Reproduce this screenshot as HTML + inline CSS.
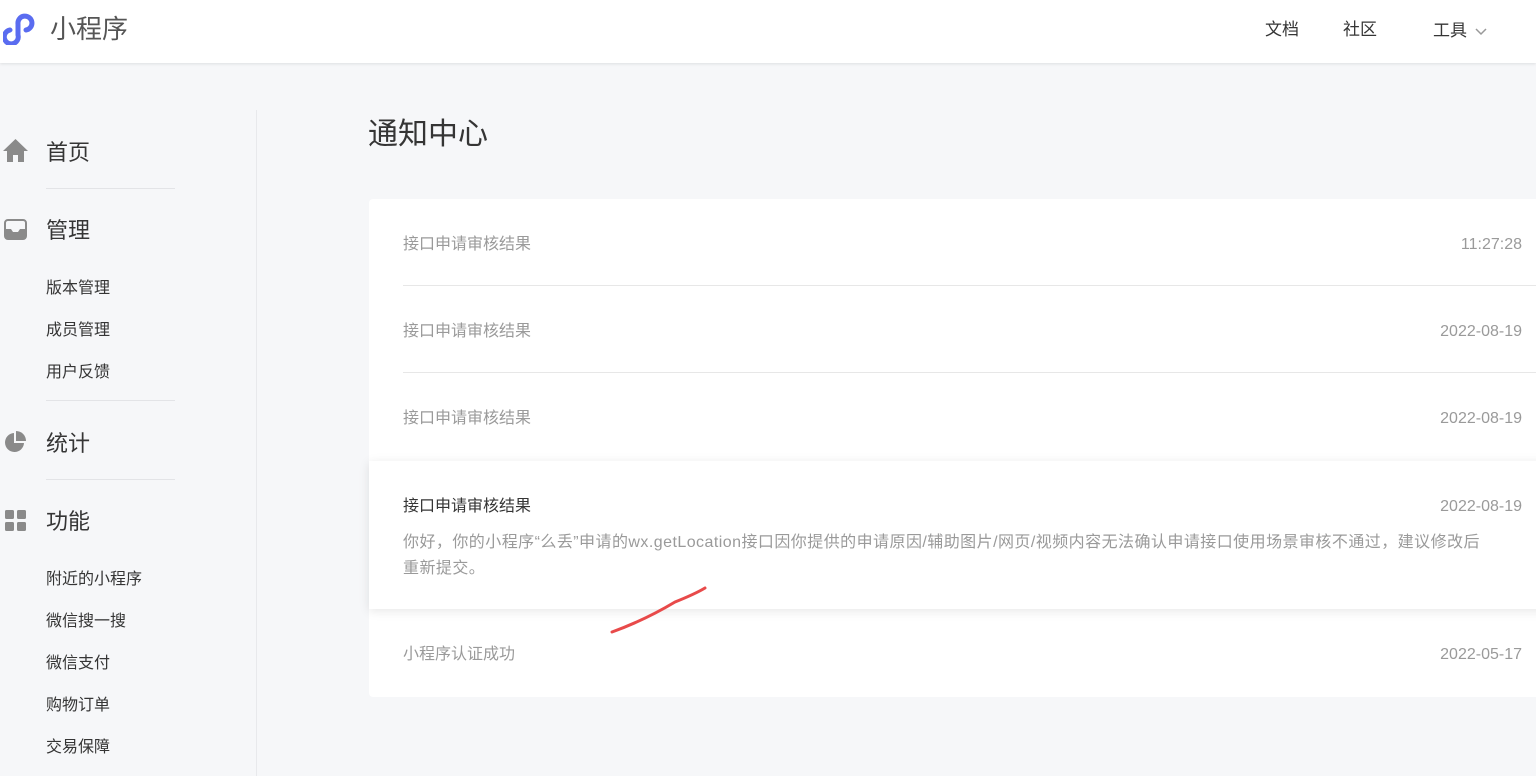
<!DOCTYPE html>
<html><head><meta charset="utf-8"><style>
*{margin:0;padding:0;box-sizing:border-box}
body{width:1536px;height:776px;overflow:hidden;background:#f6f7f9;font-family:"Liberation Sans","Noto Sans CJK SC",sans-serif;position:relative}
.hdr{position:absolute;left:0;top:0;width:1536px;height:63px;background:#fff;box-shadow:0 1px 3px rgba(0,0,0,.1)}
.t{position:absolute;white-space:nowrap;line-height:1.2}
.side{position:absolute;left:256px;top:110px;width:1px;height:666px;background:#e8e9ec}
.hr{position:absolute;left:46px;width:129px;height:1px;background:#e3e4e7}
.nav1{font-size:22px;color:#353535}
.nav2{font-size:16px;color:#353535}
.card{position:absolute;left:369px;top:199px;width:1180px;height:498px;background:#fff;border-radius:4px}
.row{position:absolute;left:34px;right:0;height:87px;border-bottom:1px solid #e7e7e7}
.row .a,.row .b{position:absolute;top:36px;font-size:16px;line-height:20px;color:#9a9a9a}
.row .a{left:0}
.row .b{right:27px}
.ex{position:absolute;left:369px;top:461px;width:1180px;height:148px;background:#fff;box-shadow:0 2px 10px rgba(0,0,0,.1)}
</style></head><body>
<div class="hdr">
<svg class="t" style="left:3px;top:11px" width="38" height="34" viewBox="0 0 38 34"><path d="M7 19 A7 7 0 1 0 15 24 L15 13 A7 7 0 1 1 23 19" fill="none" stroke="#5a6cf0" stroke-width="5" stroke-linecap="round"/></svg>
<div class="t" style="left:50px;top:14px;font-size:26px;color:#555">小程序</div>
<div class="t" style="left:1265px;top:20px;font-size:17px;color:#353535">文档</div>
<div class="t" style="left:1343px;top:20px;font-size:17px;color:#353535">社区</div>
<div class="t" style="left:1433px;top:21px;font-size:17px;color:#353535">工具</div>
<svg class="t" style="left:1474px;top:26px" width="14" height="12"><path d="M2 3 L7 8 L12 3" fill="none" stroke="#999" stroke-width="1.5"/></svg>
</div>
<div class="side"></div>
<svg class="t" style="left:3px;top:139px" width="25" height="23"><path d="M12.5 0 L25 12 L21 12 L21 23 L15 23 L15 16 L10 16 L10 23 L4 23 L4 12 L0 12Z" fill="#8a8a8a"/></svg>
<div class="t nav1" style="left:46px;top:140px">首页</div>
<div class="hr" style="top:188px"></div>
<svg class="t" style="left:4px;top:219px" width="23" height="21"><rect x="1" y="1" width="21" height="19" rx="3" fill="none" stroke="#8a8a8a" stroke-width="2"/><path d="M1 10 H7 L9 13 H14 L16 10 H22 V17 Q22 20 19 20 H4 Q1 20 1 17Z" fill="#8a8a8a"/></svg>
<div class="t nav1" style="left:46px;top:218px">管理</div>
<div class="t nav2" style="left:46px;top:279px">版本管理</div>
<div class="t nav2" style="left:46px;top:321px">成员管理</div>
<div class="t nav2" style="left:46px;top:363px">用户反馈</div>
<div class="hr" style="top:400px"></div>
<svg class="t" style="left:4px;top:430px" width="23" height="23"><path d="M10 3 A9.5 9.5 0 1 0 20 13 L10 13Z" fill="#8a8a8a"/><path d="M12 1 A10 10 0 0 1 22 11 L12 11Z" fill="#8a8a8a"/></svg>
<div class="t nav1" style="left:46px;top:431px">统计</div>
<div class="hr" style="top:479px"></div>
<svg class="t" style="left:5px;top:510px" width="22" height="22"><rect x="0" y="0" width="9" height="9" rx="1.5" fill="#8a8a8a"/><rect x="12" y="0" width="9" height="9" rx="1.5" fill="#8a8a8a"/><rect x="0" y="12" width="9" height="9" rx="1.5" fill="#8a8a8a"/><rect x="12" y="12" width="9" height="9" rx="1.5" fill="#8a8a8a"/></svg>
<div class="t nav1" style="left:46px;top:509px">功能</div>
<div class="t nav2" style="left:46px;top:570px">附近的小程序</div>
<div class="t nav2" style="left:46px;top:612px">微信搜一搜</div>
<div class="t nav2" style="left:46px;top:654px">微信支付</div>
<div class="t nav2" style="left:46px;top:696px">购物订单</div>
<div class="t nav2" style="left:46px;top:738px">交易保障</div>
<div class="t" style="left:368px;top:117px;font-size:30px;color:#353535">通知中心</div>
<div class="card">
<div class="row" style="top:0"><span class="a">接口申请审核结果</span><span class="b">11:27:28</span></div>
<div class="row" style="top:87px"><span class="a">接口申请审核结果</span><span class="b">2022-08-19</span></div>
<div class="row" style="top:174px;border:none"><span class="a">接口申请审核结果</span><span class="b">2022-08-19</span></div>
<div class="row" style="top:410px;border:none"><span class="a">小程序认证成功</span><span class="b">2022-05-17</span></div>
</div>
<div class="ex">
<div class="t" style="left:34px;top:36px;font-size:16px;line-height:20px;color:#353535">接口申请审核结果</div>
<div class="t" style="right:27px;top:36px;font-size:16px;line-height:20px;color:#9a9a9a">2022-08-19</div>
<div class="t" style="left:34px;top:69px;width:1092px;white-space:normal;font-size:16px;line-height:26px;letter-spacing:0.45px;color:#9a9a9a">你好，你的小程序“么丢”申请的wx.getLocation接口因你提供的申请原因/辅助图片/网页/视频内容无法确认申请接口使用场景审核不通过，建议修改后重新提交。</div>
</div>
<svg class="t" style="left:605px;top:582px" width="110" height="60"><path d="M7 50 Q40 38 70 20 Q90 12 100 6" fill="none" stroke="#e84a4a" stroke-width="3" stroke-linecap="round"/></svg>
</body></html>
